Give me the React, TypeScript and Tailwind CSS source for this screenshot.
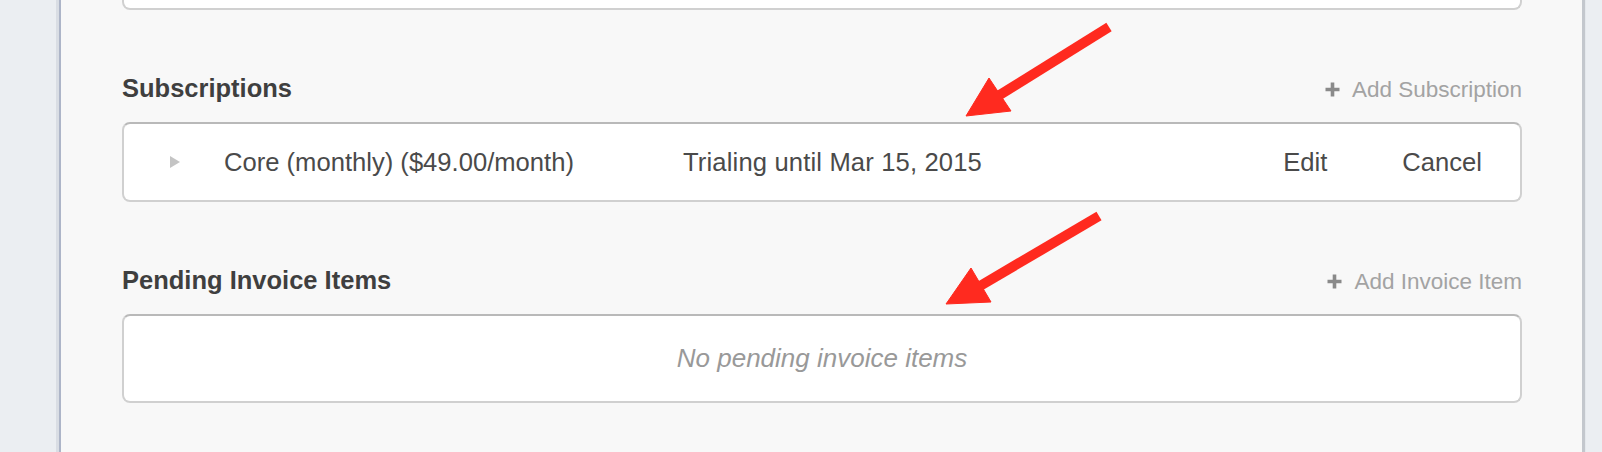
import React from "react";

function PlusIcon() {
  return (
    <svg width="17" height="17" viewBox="0 0 17 17" className="shrink-0">
      <path d="M8.5 1.5v14M1.5 8.5h14" stroke="#8a8a8a" strokeWidth="3.6" />
    </svg>
  );
}

function SectionHeader({ title, action }: { title: string; action: string }) {
  return (
    <div className="flex items-center justify-between h-[30px]">
      <h3 className="text-[25.5px] leading-[30px] font-bold text-[#3f3f3f]">{title}</h3>
      <button className="flex items-center gap-[11px] pt-[3px] text-[22.5px] leading-[30px] text-[#a3a3a3]">
        <PlusIcon />
        {action}
      </button>
    </div>
  );
}

// red annotation arrows drawn over the screenshot
function Arrows() {
  return (
    <svg
      className="absolute inset-0 pointer-events-none"
      width="1602"
      height="452"
      viewBox="0 0 1602 452"
    >
      <g fill="#ff2a1f" stroke="#ff2a1f">
        <line x1="1109" y1="27" x2="998" y2="96" strokeWidth="10" />
        <polygon points="966,116 989,78 1011,111" strokeWidth="1" />
        <line x1="1099" y1="216" x2="980" y2="286" strokeWidth="10" />
        <polygon points="946,304 971,268 991,302" strokeWidth="1" />
      </g>
    </svg>
  );
}

export default function App() {
  return (
    <div className="relative w-[1602px] h-[452px] overflow-hidden bg-[#ebeef2] font-['Liberation_Sans',Arial,sans-serif]">
      <div className="ml-[59px] w-[1523px] h-full border-l-2 border-[#adb5c8] bg-[#f8f8f8] shadow-[-3px_0_0_#d9dde4,3px_0_1px_#c3c7cd] pl-[61px] pr-[60px]">
        {/* bottom of the card above */}
        <div className="h-[10px] bg-white border-2 border-t-0 border-[#d0d0d0] rounded-b-[8px]" />

        <div className="mt-[63px]">
          <SectionHeader title="Subscriptions" action="Add Subscription" />
        </div>

        <div className="mt-[19px] h-[80px] flex items-center bg-white border-2 border-[#d0d0d0] border-t-[#b9b9b9] rounded-[8px] pl-[46px] pr-[38px] text-[25.6px] text-[#4a4a4a]">
          <svg width="10" height="12" viewBox="0 0 10 12" className="shrink-0">
            <path d="M0 0L10 6L0 12Z" fill="#c4c4c4" />
          </svg>
          <span className="ml-[44px] w-[459px] shrink-0">Core (monthly) ($49.00/month)</span>
          <span className="flex-1 tracking-[0.15px]">Trialing until Mar 15, 2015</span>
          <div className="flex items-center gap-[75px]">
            <button>Edit</button>
            <button>Cancel</button>
          </div>
        </div>

        <div className="mt-[63px]">
          <SectionHeader title="Pending Invoice Items" action="Add Invoice Item" />
        </div>

        <div className="mt-[19px] h-[89px] flex items-center justify-center bg-white border-2 border-[#d0d0d0] border-t-[#b9b9b9] rounded-[8px] text-[26px] italic text-[#999999]">
          No pending invoice items
        </div>
      </div>
      <Arrows />
    </div>
  );
}
